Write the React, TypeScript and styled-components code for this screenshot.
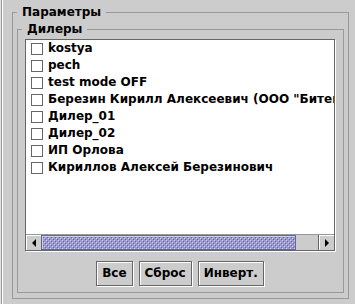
import React from 'react';
import styled, { createGlobalStyle } from 'styled-components';

const dealers = [
  'kostya',
  'pech',
  'test mode OFF',
  'Березин Кирилл Алексеевич (ООО "Битек")',
  'Дилер_01',
  'Дилер_02',
  'ИП Орлова',
  'Кириллов Алексей Березинович',
];

export default function App() {
  return (
    <>
      <GlobalStyle />
      <Frame>
        <Group>
          <Legend>Параметры</Legend>
          <OuterBody>
            <Group>
              <Legend>Дилеры</Legend>
              <InnerBody>
                <ScrollPane>
                  <List>
                    {dealers.map((name) => (
                      <Row key={name}>
                        <Check />
                        <Label>{name}</Label>
                      </Row>
                    ))}
                  </List>
                  <ScrollBar>
                    <ArrowBtn>
                      <svg width="4" height="8" viewBox="0 0 4 8">
                        <polygon points="4,0 4,8 0,4" fill="#000" />
                      </svg>
                    </ArrowBtn>
                    <Track>
                      <Thumb style={{ width: '92%' }} />
                    </Track>
                    <ArrowBtn $right>
                      <svg width="4" height="8" viewBox="0 0 4 8">
                        <polygon points="0,0 0,8 4,4" fill="#000" />
                      </svg>
                    </ArrowBtn>
                  </ScrollBar>
                </ScrollPane>
                <Buttons>
                  <Button>Все</Button>
                  <Button>Сброс</Button>
                  <Button>Инверт.</Button>
                </Buttons>
              </InnerBody>
            </Group>
          </OuterBody>
        </Group>
      </Frame>
    </>
  );
}

const GlobalStyle = createGlobalStyle`
  html, body {
    margin: 0;
    padding: 0;
    background: #cccccc;
  }
  * {
    box-sizing: border-box;
  }
`;

const Frame = styled.div`
  width: 355px;
  height: 304px;
  padding: 5px 6px 5px 12px;
  display: flex;
  flex-direction: column;
  background:
    linear-gradient(
        to right,
        #e2e2e2 0 1px,
        #9a9a9a 1px 2px,
        #ffffff 2px 3px,
        transparent 3px
      )
      no-repeat,
    #cccccc;
  font: bold 12px 'DejaVu Sans', sans-serif;
  color: #000;
`;

const Group = styled.fieldset`
  margin: 0;
  padding: 0;
  min-width: 0;
  flex: 1;
  border: 1px solid #999999;
  display: flex;
  flex-direction: column;
`;

const Legend = styled.legend`
  margin-left: 4px;
  padding: 0 5px;
  line-height: 15px;
`;

const OuterBody = styled.div`
  flex: 1;
  display: flex;
  flex-direction: column;
  padding: 2px 4px 5px 4px;
`;

const InnerBody = styled.div`
  flex: 1;
  display: flex;
  flex-direction: column;
  padding: 2px 8px 6px 7px;
`;

const ScrollPane = styled.div`
  height: 212px;
  border: 1px solid #666666;
  box-shadow: 1px 1px 0 #ffffff;
  background: #ffffff;
  display: flex;
  flex-direction: column;
  overflow: hidden;
`;

const List = styled.ul`
  flex: 1;
  margin: 0;
  padding: 0;
  list-style: none;
  overflow: hidden;
`;

const Row = styled.li`
  height: 17px;
  display: flex;
  align-items: center;
  padding-left: 5px;
  white-space: nowrap;
`;

const Check = styled.span`
  flex: none;
  width: 12px;
  height: 12px;
  margin-top: 1px;
  border: 1px solid #666666;
  background: #ffffff;
`;

const Label = styled.span`
  margin-left: 5px;
  line-height: 17px;
`;

const ScrollBar = styled.div`
  height: 16px;
  flex: none;
  display: flex;
  background: #cccccc;
  border-top: 1px solid #999999;
`;

const ArrowBtn = styled.div<{ $right?: boolean }>`
  width: 16px;
  flex: none;
  display: flex;
  align-items: center;
  justify-content: center;
  background: #cccccc;
  box-shadow: inset 1px 1px 0 #ffffff;
  ${(p) => (p.$right ? 'border-left: 1px solid #666666;' : 'border-right: 1px solid #666666;')}
`;

const Track = styled.div`
  flex: 1;
  display: flex;
  background: #cccccc;
`;

const Thumb = styled.div`
  height: 100%;
  border: 1px solid #666699;
  border-left: none;
  box-shadow: inset 1px 1px 0 #ccccff;
  background:
    conic-gradient(at 1px 1px, transparent 75%, #ccccff 0) 2px 2px / 4px 4px,
    conic-gradient(at 1px 1px, transparent 75%, #ccccff 0) 4px 4px / 4px 4px,
    conic-gradient(at 1px 1px, transparent 75%, #666699 0) 3px 3px / 4px 4px,
    conic-gradient(at 1px 1px, transparent 75%, #666699 0) 5px 5px / 4px 4px,
    #9999cc;
`;

const Buttons = styled.div`
  margin-top: 10px;
  display: flex;
  justify-content: center;
  gap: 6px;
`;

const Button = styled.button`
  height: 25px;
  padding: 0 5px;
  margin: 0;
  border: 1px solid #666666;
  box-shadow: inset 1px 1px 0 #ffffff, 1px 1px 0 #ffffff;
  background: #cccccc;
  font: bold 12px 'DejaVu Sans', sans-serif;
  color: #000;
  line-height: 23px;
`;
